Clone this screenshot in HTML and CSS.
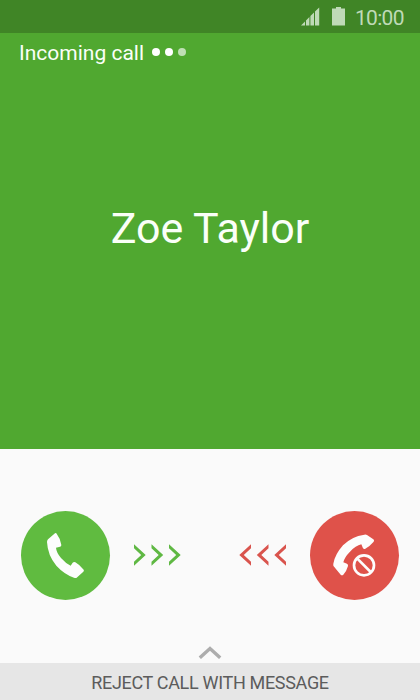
FILE: index.html
```html
<!DOCTYPE html>
<html lang="en">
<head>
    <meta charset="UTF-8">
    <meta name="viewport" content="width=device-width, initial-scale=1.0">
    <title>Incoming call</title>
    <link rel="stylesheet" href="styles.css">
</head>
<body>
    <div class="phone">
        <header class="status-bar">
            <svg class="signal" width="19" height="19" viewBox="0 0 19 19">
                <path d="M0 18.5 L4 14.5 V18.5Z M5 13.5 L8.4 10.1 V18.5 H5Z M9.4 9.1 L13 5.6 V18.5 H9.4Z M14 4.6 L18.2 0.5 V18.5 H14Z"/>
            </svg>
            <svg class="battery" width="13" height="19" viewBox="0 0 13 19">
                <path d="M0 1.5 H4 V0 H9 V1.5 H13 V18.5 H0Z"/>
            </svg>
            <span class="time">10:00</span>
        </header>

        <main class="caller">
            <div class="call-state">
                <span class="state-text">Incoming call</span>
                <span class="dot"></span>
                <span class="dot"></span>
                <span class="dot dim"></span>
            </div>
            <h1 class="name">Zoe Taylor</h1>
        </main>

        <section class="actions">
            <button class="btn btn-answer" aria-label="Answer">
                <svg width="89" height="89" viewBox="-42 -42 267 267">
                    <path d="M60 25 Q63 23 65 26 Q76 40 79 60 Q79 65 75 65 L63 68 Q64 82 78 99 Q92 115 107 122 L113 113 Q117 109 121 112 Q135 120 146 134 Q148 137 145 140 L125 158 Q122 160 117 158 Q88 148 64 122 Q38 91 36 51 Q36 46 39 43Z"/>
                </svg>
            </button>
            <svg class="arrows arrows-answer" width="48" height="22" viewBox="0 0 48 22">
                <path d="M0 0.3 L11.7 11 L0 21.7 V17.7 L7.2 11 L0 4.3Z M17.5 0.3 L29.2 11 L17.5 21.7 V17.7 L24.7 11 L17.5 4.3Z M35 0.3 L46.7 11 L35 21.7 V17.7 L42.2 11 L35 4.3Z"/>
            </svg>
            <svg class="arrows arrows-reject" width="48" height="22" viewBox="0 0 48 22">
                <path d="M12 0.3 L0.3 11 L12 21.7 V17.7 L4.8 11 L12 4.3Z M29.5 0.3 L17.8 11 L29.5 21.7 V17.7 L22.3 11 L29.5 4.3Z M47 0.3 L35.3 11 L47 21.7 V17.7 L39.8 11 L47 4.3Z"/>
            </svg>
            <button class="btn btn-reject" aria-label="Reject">
                <svg width="89" height="89" viewBox="-45 -42 267 267">
                    <path d="M118 29 Q122 27 126 30 L145 43 Q149 46 146 50 Q136 62 121 71 Q117 73 114 70 L109 58 Q92 62 75 80 Q58 97 55 112 L66 116 Q70 118 69 123 Q65 138 55 149 Q51 152 47 149 L26 124 Q24 121 25 116 Q30 88 54 61 Q80 34 118 29Z"/>
                    <circle class="ban" cx="117" cy="121" r="30"/>
                    <path class="ban" d="M97 101 L137 141"/>
                </svg>
            </button>
        </section>

        <div class="handle">
            <svg width="24" height="13" viewBox="0 0 24 13">
                <path d="M1.8 11.8 L12 2.6 L22.2 11.8"/>
            </svg>
        </div>
        <footer class="reject-message">
            <span>REJECT CALL WITH MESSAGE</span>
        </footer>
    </div>
</body>
</html>
```

FILE: styles.css
```css
* {
    margin: 0;
    padding: 0;
    box-sizing: border-box;
    font-family: Roboto, Arial, sans-serif;
}

body {
    background-color: #fafafa;
}

.phone {
    width: 420px;
    height: 700px;
    display: flex;
    flex-direction: column;
    overflow: hidden;
}

.status-bar {
    height: 33px;
    display: flex;
    align-items: center;
    padding: 0 0 1px 301px;
    background: #408526;
    color: #bfdab7;
}

.status-bar svg {
    fill: #bfdab7;
}

.battery {
    margin: 0 10px 0 12px;
}

.time {
    font-size: 21px;
    font-weight: 400;
    letter-spacing: -0.7px;
    padding-top: 4px;
}

.caller {
    height: 416px;
    background: #50a830;
    color: #fafff8;
}

.call-state {
    height: 40px;
    display: flex;
    align-items: center;
    padding-left: 19px;
}

.state-text {
    font-size: 21px;
    margin-right: 8px;
}

.dot {
    width: 8px;
    height: 8px;
    margin: 0 5px 3px 0;
    border-radius: 50%;
    background: white;
}

.dot.dim {
    background: #c0dfb5;
}

.name {
    padding-top: 129px;
    font-size: 43px;
    line-height: 52px;
    font-weight: 400;
    text-align: center;
}

.actions {
    height: 214px;
    display: flex;
    align-items: center;
    padding: 0 21px 2px;
}

.btn {
    width: 89px;
    height: 89px;
    border: none;
    border-radius: 50%;
    cursor: pointer;
}

.btn svg {
    display: block;
    fill: #fdfdfd;
}

.btn-answer {
    background: #60bb40;
}

.btn-reject {
    background: #df524a;
}

.btn .ban {
    fill: none;
    stroke: #fdfdfd;
    stroke-width: 8;
}

.arrows-answer {
    margin: 0 57px 0 24px;
    fill: #5fb843;
}

.arrows-reject {
    margin-right: 23px;
    fill: #d9544d;
}

.handle {
    height: 0;
    display: flex;
    justify-content: center;
    align-items: flex-end;
}

.handle svg {
    margin-bottom: 4px;
    fill: none;
    stroke: #adadad;
    stroke-width: 3.4;
}

.reject-message {
    height: 37px;
    padding-top: 2px;
    display: flex;
    justify-content: center;
    align-items: center;
    background: #e6e6e6;
    color: #5c5c5c;
    font-size: 18px;
    letter-spacing: -0.32px;
}
```
